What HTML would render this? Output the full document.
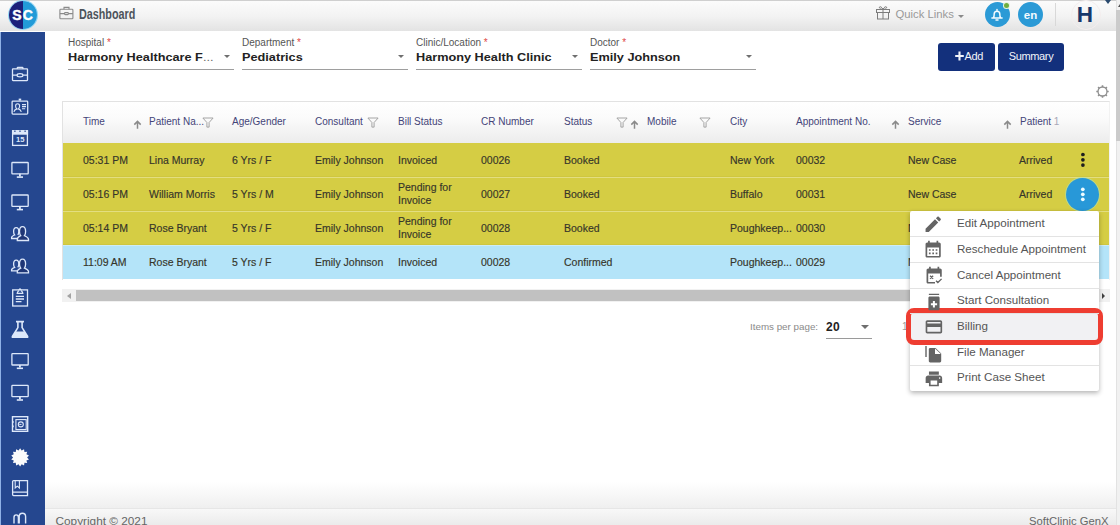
<!DOCTYPE html>
<html><head><meta charset="utf-8">
<style>
*{box-sizing:border-box;margin:0;padding:0}
html,body{width:1120px;height:525px;overflow:hidden;background:#fff;font-family:"Liberation Sans",sans-serif;position:relative}
.a{position:absolute}
#hdr{left:0;top:0;width:1116px;height:31px;background:linear-gradient(#fbfbfb 0%,#f3f3f3 50%,#e3e3e3 100%);border-top:1px solid #cfcfcf}
#logo{left:8.5px;top:1px;width:28px;height:28px;border-radius:50%;overflow:hidden;background:linear-gradient(90deg,#1c207a 50%,#229bd8 50%);box-shadow:0 0 0 1px #8fd6f5}
#logo span{position:absolute;top:7.4px;color:#fff;font-weight:bold;font-size:14px;line-height:14px;-webkit-text-stroke:.4px #fff}
#side{left:0;top:32px;width:45px;height:493px;background:#25478f;border-left:1px solid #8fb1e6}
#strip{left:1116px;top:0;width:4px;height:525px;background:#f1f1f1;box-shadow:inset 1px 0 0 #e2e2e2}
.dash{left:79px;top:6px;font-weight:bold;font-size:14px;color:#4d535b;transform:scaleX(.77);transform-origin:0 0;line-height:17px}
.fld{top:34px;width:166px;height:36px;border-bottom:1px solid #9e9e9e}
.fld .lb{position:absolute;left:0;top:3px;font-size:10px;color:#555;line-height:12px}
.fld .lb i{font-style:normal;color:#e04848}
.fld .v{position:absolute;left:0;top:15.8px;font-size:10.5px;font-weight:bold;color:#222;line-height:14px;white-space:nowrap;transform:scaleX(1.21);transform-origin:0 0}
.fld .ar{position:absolute;right:4.5px;top:21.3px;width:0;height:0;border-left:3.8px solid transparent;border-right:3.8px solid transparent;border-top:3.8px solid #6f6f6f}
.btn{top:43px;height:28px;background:#13307c;border-radius:3px;color:#f2f4fa;font-size:11px;line-height:26px;text-align:center;letter-spacing:-.35px}
#tbl{left:62px;top:101px;width:1048px;height:179px;overflow:hidden;background:#fff;box-shadow:inset 0 1px 0 #e4e4e4,inset 1px 0 0 #ececec,inset -1px 0 0 #ececec}
#th{left:0;top:0;width:100%;height:42px;background:linear-gradient(#ffffff 0%,#fbfbfb 40%,#ececec 100%)}
.h{top:15px;font-size:10px;color:#444478;line-height:12px;white-space:nowrap}
.row{left:0;width:100%;height:34px}
.y{background:#d5cd44}
.b{background:#b4e4f9}
.sep{box-shadow:inset 0 1px 0 rgba(255,255,240,.35)}
.y{box-shadow:inset 0 -1px 0 rgba(120,110,0,.06)}
.y.sep{box-shadow:inset 0 1px 0 rgba(255,255,240,.35),inset 0 -1px 0 rgba(120,110,0,.06)}
.c{font-size:10.5px;color:#35352a;line-height:13px;white-space:nowrap;margin-top:.6px;-webkit-text-stroke:.15px #35352a}
#menu{left:910px;top:211px;width:189px;height:180px;background:#fff;box-shadow:0 2px 5px rgba(0,0,0,.3);border-radius:2px}
.mi{left:0;width:189px;height:26px;border-bottom:1px solid #e3e3e3}
.mi .t{position:absolute;left:47px;top:5.3px;font-size:11.6px;color:#555;line-height:14px;white-space:nowrap}
#foot{left:45px;top:508px;width:1071px;height:17px;background:linear-gradient(#f8f8f8,#ebebeb);border-top:1px solid #e6e6e6}
#fade{left:45px;top:482px;width:1071px;height:26px;background:linear-gradient(rgba(241,241,241,0),#efefef)}
</style></head><body>
<div id="hdr" class="a"></div>
<div id="logo" class="a"><span style="left:3.8px">S</span><span style="left:14.2px">C</span></div>
<div class="a dash">Dashboard</div>
<div id="side" class="a"></div>
<svg class="a" style="left:0;top:0" width="45" height="525" viewBox="0 0 45 525" fill="none" stroke="#dde8fa" stroke-width="1.3">
<rect x="12.5" y="68.9" width="15" height="11.7" rx="0.5"/><path d="M17.3 68.9v-1q0-.5.5-.5h4.6q.5 0 .5.5v1M12.5 75.2h4.3M23.2 75.2h4.3"/><ellipse cx="20" cy="75.2" rx="3" ry="1.6"/>
<rect x="12.1" y="101.1" width="15.6" height="13" rx="0.8"/><rect x="18.7" y="98.6" width="2.5" height="2" fill="#dde8fa" stroke="none"/><path d="M13.9 111.8q.5-2.3 3-2.9-1.3-1-1.3-2.9 0-2.2 2-2.2t2 2.2q0 1.9-1.3 2.9 2.5.6 3 2.9M22 104.6h4M22 106.6h4M22 108.8h3.2" stroke-width="1.1"/>
<rect x="12.6" y="130.8" width="14.8" height="14.6"/><rect x="12" y="130.1" width="16.1" height="4.6" fill="#dde8fa" stroke="none"/><path d="M14.9 130.6v1.3M20 130.6v1.3M25.1 130.6v1.3" stroke="#25478f" stroke-width="1.2"/>
<text x="16" y="142.2" fill="#dde8fa" stroke="none" font-family="Liberation Sans" font-weight="bold" font-size="7.6">15</text>
<rect x="11.9" y="162.5" width="16.3" height="11.3" rx="0.6"/><path d="M19.9 173.8v2.6" stroke-width="1.8"/><path d="M16.8 177.1h6.2" stroke-width="1.6"/>
<rect x="11.9" y="195.0" width="16.3" height="11.3" rx="0.6"/><path d="M19.9 206.3v2.6" stroke-width="1.8"/><path d="M16.8 209.6h6.2" stroke-width="1.6"/>
<path d="M17.3 238.5H11.6V237.6C11.6 236.4 12.8 235.6 14.6 235.0C13.9 234.2 13.6 232.9 13.6 231.6C13.6 229.0 14.6 227.7 16.2 227.7C17.8 227.7 18.8 229.0 18.8 231.6C18.8 232.9 18.5 234.2 17.8 235.0" fill="none"/><path d="M17.3 240.5V239.2C17.3 237.5 18.7 236.6 20.7 235.7C19.9 234.79999999999998 19.5 233.2 19.5 231.6C19.5 228.4 20.7 226.7 22.5 226.7C24.4 226.7 25.6 228.4 25.6 231.6C25.6 233.2 25.2 234.79999999999998 24.4 235.7C26.4 236.6 28.5 237.5 28.5 239.2V240.5Z" fill="#1f3676"/>
<path d="M17.3 270.9H11.6V270.0C11.6 268.8 12.8 268.0 14.6 267.4C13.9 266.6 13.6 265.3 13.6 264.0C13.6 261.4 14.6 260.1 16.2 260.1C17.8 260.1 18.8 261.4 18.8 264.0C18.8 265.3 18.5 266.6 17.8 267.4" fill="none"/><path d="M17.3 272.9V271.6C17.3 269.9 18.7 269.0 20.7 268.1C19.9 267.2 19.5 265.6 19.5 264.0C19.5 260.8 20.7 259.1 22.5 259.1C24.4 259.1 25.6 260.8 25.6 264.0C25.6 265.6 25.2 267.2 24.4 268.1C26.4 269.0 28.5 269.9 28.5 271.6V272.9Z" fill="#1f3676"/>
<rect x="12.7" y="289.9" width="14.8" height="16.1"/><path d="M17.2 293.4q0-1.6 1.6-2.6l.5-1.2q.7-1.2 1.4 0l.5 1.2q1.6 1 1.6 2.6z" fill="#25478f"/><path d="M15.8 296.4h8.2M15.8 299h8.2M15.8 301.7h5.7"/>
<path d="M16 321.6h8M17.9 321.8v5.8l-5.5 8.9q-.4.8.4.8h14.4q.8 0 .4-.8l-5.5-8.9v-5.8" stroke-width="1.6"/><path d="M15.5 331.6h9l3.1 5q.4.7-.4.7H12.8q-.8 0-.4-.7z" fill="#dde8fa" stroke="none"/>
<rect x="11.9" y="353.70000000000005" width="16.3" height="11.3" rx="0.6"/><path d="M19.9 365.0v2.6" stroke-width="1.8"/><path d="M16.8 368.3h6.2" stroke-width="1.6"/>
<rect x="11.9" y="385.40000000000003" width="16.3" height="11.3" rx="0.6"/><path d="M19.9 396.7v2.6" stroke-width="1.8"/><path d="M16.8 400.0h6.2" stroke-width="1.6"/>
<rect x="12.5" y="416.7" width="15.2" height="14.6" stroke-width="1.4"/><rect x="15.9" y="419.6" width="10.3" height="9.9" stroke-width="1.1"/><circle cx="20.8" cy="424.4" r="2.5" stroke-width="1.1"/><path d="M19.3 424.4h2.2" stroke-width="1"/><path d="M13.1 421.2v1.6M13.1 425.6v1.6" stroke-width="1.3"/>
<path d="M20.10 448.30 L21.66 450.58 L24.05 449.20 L24.46 451.93 L27.21 451.73 L26.41 454.36 L28.97 455.38 L27.10 457.40 L28.97 459.42 L26.41 460.44 L27.21 463.07 L24.46 462.87 L24.05 465.60 L21.66 464.22 L20.10 466.50 L18.54 464.22 L16.15 465.60 L15.74 462.87 L12.99 463.07 L13.79 460.44 L11.23 459.42 L13.10 457.40 L11.23 455.38 L13.79 454.36 L12.99 451.73 L15.74 451.93 L16.15 449.20 L18.54 450.58Z" fill="#fbfbfb" stroke="none"/>
<path d="M13.6 480.6h13.9v15H13.6q-1 0-1-1V481.6q0-1 1-1zM12.8 492.2h14.7"/><path d="M15.2 480.6v7.4l2.1-1.8 2.1 1.8v-7.4" stroke-width="1.1"/>
<path d="M14 523.5v-6q0-2.6 2.2-2.6t2.2 2.6v6M19.2 523.5v-7q0-3.2 3.2-3.2t3.2 3.2v7" stroke-width="1.4"/>
</svg>
<!-- header items -->
<svg class="a" style="left:59px;top:6px" width="15" height="14" viewBox="0 0 15 14" fill="none" stroke="#8a8a8a" stroke-width="1.1"><rect x="0.9" y="3.2" width="13" height="9.6" rx="0.8"/><path d="M5 3.2V1.4h5v1.8M0.9 7.6h4.6M9.4 7.6h4.5"/><rect x="5.5" y="6.6" width="3.9" height="2" rx="0.8"/></svg>
<svg class="a" style="left:875px;top:4px" width="16" height="16" viewBox="0 0 16 16" fill="none" stroke="#7c7c7c" stroke-width="1"><rect x="1.5" y="5.5" width="13" height="3"/><rect x="2.5" y="8.5" width="11" height="6.5"/><path d="M8 5.5V15M8 5.5C6.5 2 3.8 2.2 4.5 4 5 5.2 8 5.5 8 5.5ZM8 5.5C9.5 2 12.2 2.2 11.5 4 11 5.2 8 5.5 8 5.5Z"/></svg>
<div class="a" style="left:895.5px;top:7.5px;font-size:11.3px;color:#999;line-height:13px;white-space:nowrap">Quick Links</div>
<div class="a" style="left:958px;top:15px;width:0;height:0;border-left:3px solid transparent;border-right:3px solid transparent;border-top:3px solid #8a8a8a"></div>
<div class="a" style="left:985px;top:2px;width:25px;height:25px;border-radius:50%;background:#2b9ad6"></div>
<svg class="a" style="left:991.3px;top:8px" width="12" height="13" viewBox="0 0 12 13" fill="none" stroke="#f4fbff" stroke-width="1.5" stroke-linecap="round"><path d="M0.9 10h10.2M2.4 9.8c.7-.9.8-1.8.8-3.8a2.8 2.8 0 0 1 5.6 0c0 2 .1 2.9.8 3.8M5 11.9h2M6 1.4v1"/></svg>
<div class="a" style="left:1004px;top:3px;width:5px;height:5px;border-radius:50%;background:#6fae3e;box-shadow:0 0 0 1px #e8f3e0"></div>
<div class="a" style="left:1018px;top:2px;width:25px;height:25px;border-radius:50%;background:#2b9ad6;color:#f4fbff;font-weight:bold;font-size:11.5px;line-height:27px;text-align:center">en</div>
<div class="a" style="left:1055px;top:3px;width:1px;height:23px;background:#d8d8d8"></div>
<div class="a" style="left:1071px;top:0px;width:30px;height:30px;border-radius:50%;border:1px solid #f4eeee"></div>
<div class="a" style="left:1076.8px;top:3px;font-weight:bold;font-size:22.5px;color:#17386b;line-height:24px">H</div>
<div class="a" style="left:1104.6px;top:0;width:0;height:0;border-left:3.7px solid transparent;border-right:3.7px solid transparent;border-top:4.8px solid #2a4a6e"></div>
<svg class="a" style="left:1094px;top:83.2px" width="17" height="17" viewBox="0 0 17 17" fill="none" stroke="#8f8f8f" stroke-width="1.3"><circle cx="8.5" cy="8.5" r="4.5"/><path d="M8.5 2.3v1.8M8.5 12.9v1.8M2.3 8.5h1.8M12.9 8.5h1.8M4.1 4.1l1.3 1.3M11.6 11.6l1.3 1.3M4.1 12.9l1.3-1.3M11.6 5.4l1.3-1.3" stroke-width="1.6"/></svg>

<div id="strip" class="a"></div>
<div class="a" style="left:1116px;top:10px;width:4px;height:131px;background:#cbcbcb"></div>
<div class="a" style="left:1118px;top:4px;width:0;height:0;border-left:2px solid transparent;border-right:2px solid transparent;border-bottom:3px solid #505050"></div>

<div class="a fld" style="left:68px"><div class="lb">Hospital <i>*</i></div><div class="v">Harmony Healthcare F<span style="color:#6a6a6a;font-weight:normal;letter-spacing:0px">...</span></div><div class="ar"></div></div>
<div class="a fld" style="left:242px"><div class="lb">Department <i>*</i></div><div class="v">Pediatrics</div><div class="ar"></div></div>
<div class="a fld" style="left:416px"><div class="lb">Clinic/Location <i>*</i></div><div class="v">Harmony Health Clinic</div><div class="ar"></div></div>
<div class="a fld" style="left:590px"><div class="lb">Doctor <i>*</i></div><div class="v">Emily Johnson</div><div class="ar"></div></div>

<div class="a btn" style="left:938px;width:57px"><svg class="a" style="left:17px;top:8px" width="9" height="10" viewBox="0 0 9 10" stroke="#f2f4fa" stroke-width="2.1"><path d="M4.5 0.6v9M0.2 5h8.6"/></svg><span class="a" style="left:26.5px;top:0">Add</span></div>
<div class="a btn" style="left:998px;width:66px">Summary</div>

<div id="tbl" class="a">
 <div id="th" class="a">
  <div class="a h" style="left:21px">Time</div>
  <div class="a h" style="left:87px">Patient Na...</div>
  <div class="a h" style="left:170px">Age/Gender</div>
  <div class="a h" style="left:253px">Consultant</div>
  <div class="a h" style="left:336px">Bill Status</div>
  <div class="a h" style="left:419px">CR Number</div>
  <div class="a h" style="left:502px">Status</div>
  <div class="a h" style="left:585px">Mobile</div>
  <div class="a h" style="left:668px">City</div>
  <div class="a h" style="left:734px">Appointment No.</div>
  <div class="a h" style="left:846px">Service</div>
  <div class="a h" style="left:958px">Patient<span style="color:#a8a8b8;margin-left:2.5px">1</span></div>
  <svg class="a" style="left:71.2px;top:19px" width="9" height="9" viewBox="0 0 9 9" fill="none" stroke="#8a8a8a" stroke-width="1.5"><path d="M4.5 8.8V1.6M1.3 4.6L4.5 1.4 7.7 4.6"/></svg><svg class="a" style="left:140.2px;top:16px" width="12" height="11" viewBox="0 0 12 11" fill="none" stroke="#a0a0a0" stroke-width="0.95"><path d="M0.9 1h10.2L7.1 5.5v4.6H4.9V5.5Z" stroke-linejoin="round"/></svg><svg class="a" style="left:305.2px;top:16px" width="12" height="11" viewBox="0 0 12 11" fill="none" stroke="#a0a0a0" stroke-width="0.95"><path d="M0.9 1h10.2L7.1 5.5v4.6H4.9V5.5Z" stroke-linejoin="round"/></svg><svg class="a" style="left:554.2px;top:16px" width="12" height="11" viewBox="0 0 12 11" fill="none" stroke="#a0a0a0" stroke-width="0.95"><path d="M0.9 1h10.2L7.1 5.5v4.6H4.9V5.5Z" stroke-linejoin="round"/></svg><svg class="a" style="left:568.2px;top:19px" width="9" height="9" viewBox="0 0 9 9" fill="none" stroke="#8a8a8a" stroke-width="1.5"><path d="M4.5 8.8V1.6M1.3 4.6L4.5 1.4 7.7 4.6"/></svg><svg class="a" style="left:637.2px;top:16px" width="12" height="11" viewBox="0 0 12 11" fill="none" stroke="#a0a0a0" stroke-width="0.95"><path d="M0.9 1h10.2L7.1 5.5v4.6H4.9V5.5Z" stroke-linejoin="round"/></svg><svg class="a" style="left:829.2px;top:19px" width="9" height="9" viewBox="0 0 9 9" fill="none" stroke="#8a8a8a" stroke-width="1.5"><path d="M4.5 8.8V1.6M1.3 4.6L4.5 1.4 7.7 4.6"/></svg><svg class="a" style="left:941.2px;top:19px" width="9" height="9" viewBox="0 0 9 9" fill="none" stroke="#8a8a8a" stroke-width="1.5"><path d="M4.5 8.8V1.6M1.3 4.6L4.5 1.4 7.7 4.6"/></svg>
 </div>
 <div class="a row y" style="top:42px">
  <div class="a c" style="left:21px;top:10px">05:31 PM</div>
  <div class="a c" style="left:87px;top:10px">Lina Murray</div>
  <div class="a c" style="left:170px;top:10px">6 Yrs / F</div>
  <div class="a c" style="left:253px;top:10px">Emily Johnson</div>
  <div class="a c" style="left:336px;top:10px">Invoiced</div>
  <div class="a c" style="left:419px;top:10px">00026</div>
  <div class="a c" style="left:502px;top:10px">Booked</div>
  <div class="a c" style="left:668px;top:10px">New York</div>
  <div class="a c" style="left:734px;top:10px">00032</div>
  <div class="a c" style="left:846px;top:10px">New Case</div>
  <div class="a c" style="left:957px;top:10px">Arrived</div>
 </div>
 <div class="a row y sep" style="top:76px">
  <div class="a c" style="left:21px;top:10px">05:16 PM</div>
  <div class="a c" style="left:87px;top:10px">William Morris</div>
  <div class="a c" style="left:170px;top:10px">5 Yrs / M</div>
  <div class="a c" style="left:253px;top:10px">Emily Johnson</div>
  <div class="a c" style="left:336px;top:3.3px;line-height:13.4px">Pending for<br>Invoice</div>
  <div class="a c" style="left:419px;top:10px">00027</div>
  <div class="a c" style="left:502px;top:10px">Booked</div>
  <div class="a c" style="left:668px;top:10px">Buffalo</div>
  <div class="a c" style="left:734px;top:10px">00031</div>
  <div class="a c" style="left:846px;top:10px">New Case</div>
  <div class="a c" style="left:957px;top:10px">Arrived</div>
 </div>
 <div class="a row y sep" style="top:110px">
  <div class="a c" style="left:21px;top:10px">05:14 PM</div>
  <div class="a c" style="left:87px;top:10px">Rose Bryant</div>
  <div class="a c" style="left:170px;top:10px">5 Yrs / F</div>
  <div class="a c" style="left:253px;top:10px">Emily Johnson</div>
  <div class="a c" style="left:336px;top:3.3px;line-height:13.4px">Pending for<br>Invoice</div>
  <div class="a c" style="left:419px;top:10px">00028</div>
  <div class="a c" style="left:502px;top:10px">Booked</div>
  <div class="a c" style="left:668px;top:10px">Poughkeep...</div>
  <div class="a c" style="left:734px;top:10px">00030</div>
  <div class="a c" style="left:846px;top:10px">New Case</div>
 </div>
 <div class="a row b sep" style="top:144px">
  <div class="a c" style="left:21px;top:10px">11:09 AM</div>
  <div class="a c" style="left:87px;top:10px">Rose Bryant</div>
  <div class="a c" style="left:170px;top:10px">5 Yrs / F</div>
  <div class="a c" style="left:253px;top:10px">Emily Johnson</div>
  <div class="a c" style="left:336px;top:10px">Invoiced</div>
  <div class="a c" style="left:419px;top:10px">00028</div>
  <div class="a c" style="left:502px;top:10px">Confirmed</div>
  <div class="a c" style="left:668px;top:10px">Poughkeep...</div>
  <div class="a c" style="left:734px;top:10px">00029</div>
  <div class="a c" style="left:846px;top:10px">New Case</div>
 </div>
</div>


<!-- scrollbar -->
<div class="a" style="left:62px;top:289px;width:1048px;height:13px;background:#f1f1f1"></div>
<div class="a" style="left:76px;top:290px;width:1020px;height:11px;background:#c1c1c1"></div>
<div class="a" style="left:67px;top:293px;width:0;height:0;border-top:3px solid transparent;border-bottom:3px solid transparent;border-right:4px solid #a3a3a3"></div>
<div class="a" style="left:1102px;top:292.7px;width:0;height:0;border-top:3px solid transparent;border-bottom:3px solid transparent;border-left:3.5px solid #404040"></div>
<!-- pagination -->
<div class="a" style="left:750px;top:321px;font-size:9.8px;color:#8a8a8a;line-height:12px;white-space:nowrap">Items per page:</div>
<div class="a" style="left:826px;top:318px;width:46px;height:21px;border-bottom:1.5px solid #9a9a9a"></div>
<div class="a" style="left:826px;top:320px;font-size:12px;font-weight:bold;color:#222;line-height:14px;letter-spacing:.3px">20</div>
<div class="a" style="left:861px;top:325px;width:0;height:0;border-left:4px solid transparent;border-right:4px solid transparent;border-top:4px solid #6f6f6f"></div>
<div class="a" style="left:902px;top:321px;font-size:10px;color:#9a9a9a;line-height:12px">1</div>

<div class="a" style="left:1066.2px;top:177.6px;width:33px;height:33px;border-radius:50%;background:#2898d8;box-shadow:0 0 0 1px rgba(170,225,190,.55)"></div>
<div class="a" style="left:62px;top:101px;width:1048px;height:179px;border:1px solid #e2e2e2;border-bottom:none;border-right-color:#f2f2f2"></div>
<svg class="a" style="left:1070px;top:145px" width="26" height="65" viewBox="1070 145 26 65"><g fill="#1e1e1e"><circle cx="1082.9" cy="154.5" r="1.85"/><circle cx="1082.9" cy="159.8" r="1.85"/><circle cx="1082.9" cy="165.1" r="1.85"/></g><g fill="#eefbff"><circle cx="1082.8" cy="189.3" r="1.85"/><circle cx="1082.8" cy="194.3" r="1.85"/><circle cx="1082.8" cy="199.3" r="1.85"/></g></svg>
<div id="fade" class="a"></div>
<div id="foot" class="a"></div>
<div class="a" style="left:55.5px;top:514px;font-size:11.8px;color:#666;line-height:14px;white-space:nowrap">Copyright © 2021</div>
<div class="a" style="left:1029px;top:514px;font-size:11.25px;color:#666;line-height:14px;white-space:nowrap">SoftClinic GenX</div>


<div id="menu" class="a">
<div class="a" style="left:-4px;top:97px;width:196.5px;height:36.5px;border:5.5px solid #ee3d31;border-radius:8px;background:#f1f1f3"></div>
<div class="a mi" style="top:103px;border-bottom:none"><div class="t">Billing</div></div>
 <div class="a mi" style="top:0"><div class="t">Edit Appointment</div></div>
 <div class="a mi" style="top:26px"><div class="t">Reschedule Appointment</div></div>
 <div class="a mi" style="top:52px"><div class="t">Cancel Appointment</div></div>
 <div class="a mi" style="top:77px"><div class="t">Start Consultation</div></div>
 <div class="a mi" style="top:129px"><div class="t">File Manager</div></div>
 <div class="a mi" style="top:154px;border-bottom:none"><div class="t">Print Case Sheet</div></div>
</div>

<svg class="a" style="left:922.8px;top:213.6px" width="20.5" height="20.5" viewBox="0 0 24 24" fill="#646464"><path d="M3 17.25V21h3.75L17.81 9.94l-3.75-3.75L3 17.25zM20.71 7.04c.39-.39.39-1.02 0-1.41l-2.34-2.34c-.39-.39-1.02-.39-1.41 0l-1.83 1.83 3.75 3.75 1.83-1.83z"/></svg>
<svg class="a" style="left:923px;top:239px" width="20.3" height="20.3" viewBox="0 0 24 24" fill="#646464"><path d="M19 4h-1V2h-2v2H8V2H6v2H5c-1.11 0-1.99.9-1.99 2L3 20c0 1.1.89 2 2 2h14c1.1 0 2-.9 2-2V6c0-1.1-.9-2-2-2zm0 16H5V10h14v10zM9 14H7v-2h2v2zm4 0h-2v-2h2v2zm4 0h-2v-2h2v2zm-8 4H7v-2h2v2zm4 0h-2v-2h2v2zm4 0h-2v-2h2v2z"/></svg>
<svg class="a" style="left:923.5px;top:265.2px" width="20.3" height="20.3" viewBox="0 0 24 24" fill="#646464"><path d="M19 4h-1V2h-2v2H8V2H6v2H5c-1.11 0-1.99.9-1.99 2L3 20c0 1.1.89 2 2 2h8v-2H5V10h14v4h2V6c0-1.1-.9-2-2-2z"/><path d="M7.2 12.6l3.6 3.6M10.8 12.6l-3.6 3.6M14.2 18.6l2.2 2.2 4.4-4.4" stroke="#646464" stroke-width="1.6" fill="none"/></svg>
<svg class="a" style="left:922.5px;top:291px" width="22" height="22" viewBox="0 0 24 24" fill="#646464"><path d="M6.4 3h11.2v1.4H6.4zM16.6 6H7.4C6.5 6 5.9 6.6 5.9 7.5v12c0 .9.6 1.5 1.5 1.5h9.2c.9 0 1.5-.6 1.5-1.5v-12c0-.9-.6-1.5-1.5-1.5zm-1.2 9.6h-2.4v2.4h-2.2v-2.4H8.6v-2.2h2.2V11h2.2v2.4h2.4z"/></svg>
<svg class="a" style="left:923.8px;top:317.3px" width="19.8" height="19.8" viewBox="0 0 24 24" fill="#646464"><path d="M20 4H4c-1.11 0-1.99.89-1.99 2L2 18c0 1.11.89 2 2 2h16c1.11 0 2-.89 2-2V6c0-1.110-.89-2-2-2zm0 14H4v-6h16v6zm0-10H4V6h16v2z"/></svg>
<svg class="a" style="left:924px;top:344.5px" width="20" height="20" viewBox="0 0 20 20" fill="#646464"><rect x="1.3" y="1" width="1.4" height="11"/><path d="M6.2 3c-.8 0-1.4.6-1.4 1.4v11.6c0 .8.6 1.4 1.4 1.4h9.6c.8 0 1.4-.6 1.4-1.4V8.5L11.6 3z"/><path d="M11 3.4v5.6h5.8z" fill="#fff"/></svg>
<svg class="a" style="left:923.8px;top:368.8px" width="19.8" height="19.8" viewBox="0 0 24 24" fill="#646464"><path d="M19 8H5c-1.66 0-3 1.34-3 3v6h4v4h12v-4h4v-6c0-1.66-1.34-3-3-3zm-3 11H8v-5h8v5zm3-7c-.55 0-1-.45-1-1s.45-1 1-1 1 .45 1 1-.45 1-1 1zm-1-9H6v4h12V3z"/></svg>
</body></html>
